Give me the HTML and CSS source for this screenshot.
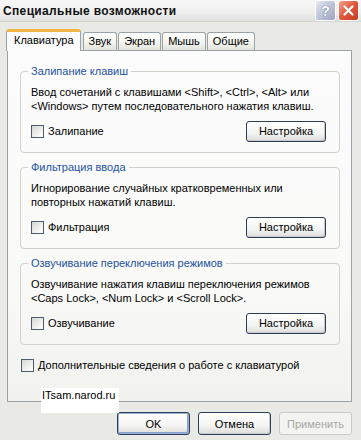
FILE: index.html
```html
<!DOCTYPE html>
<html lang="ru">
<head>
<meta charset="utf-8">
<title>Специальные возможности</title>
<link rel="stylesheet" href="styles.css">
</head>
<body>
<div class="window">
  <div class="titlebar">
    <span class="title">Специальные возможности</span>
    <div class="tb-buttons">
      <span class="tb-btn help">?</span>
      <span class="tb-btn close">
        <svg width="13" height="13" viewBox="0 0 13 13"><path d="M2.5 2.5 L10.5 10.5 M10.5 2.5 L2.5 10.5" stroke="#fff" stroke-width="2.2" stroke-linecap="round"/></svg>
      </span>
    </div>
  </div>
  <div class="content">
    <div class="tabs">
      <span class="tab active">Клавиатура</span>
      <span class="tab">Звук</span>
      <span class="tab">Экран</span>
      <span class="tab">Мышь</span>
      <span class="tab">Общие</span>
    </div>
    <div class="panel">
      <fieldset class="group">
        <legend>Залипание клавиш</legend>
        <p class="desc">Ввод сочетаний с клавишами &lt;Shift&gt;, &lt;Ctrl&gt;, &lt;Alt&gt; или<br>&lt;Windows&gt; путем последовательного нажатия клавиш.</p>
        <div class="row">
          <label class="check"><span class="box"></span>Залипание</label>
          <span class="btn setup">Настройка</span>
        </div>
      </fieldset>
      <fieldset class="group">
        <legend>Фильтрация ввода</legend>
        <p class="desc">Игнорирование случайных кратковременных или<br>повторных нажатий клавиш.</p>
        <div class="row">
          <label class="check"><span class="box"></span>Фильтрация</label>
          <span class="btn setup">Настройка</span>
        </div>
      </fieldset>
      <fieldset class="group">
        <legend>Озвучивание переключения режимов</legend>
        <p class="desc">Озвучивание нажатия клавиш переключения режимов<br>&lt;Caps Lock&gt;, &lt;Num Lock&gt; и &lt;Scroll Lock&gt;.</p>
        <div class="row">
          <label class="check"><span class="box"></span>Озвучивание</label>
          <span class="btn setup">Настройка</span>
        </div>
      </fieldset>
      <label class="check extra"><span class="box"></span>Дополнительные сведения о работе с клавиатурой</label>
    </div>
    <div class="footer">
      <span class="btn dlg default">OK</span>
      <span class="btn dlg">Отмена</span>
      <span class="btn dlg disabled">Применить</span>
    </div>
  </div>
  <div class="watermark">ITsam.narod.ru</div>
</div>
</body>
</html>
```

FILE: styles.css
```css
* { box-sizing: border-box; }
html, body { margin: 0; padding: 0; }
body {
  width: 361px;
  height: 440px;
  overflow: hidden;
  background: #e8e8e5;
  font-family: "Liberation Sans", Arial, sans-serif;
  font-size: 11px;
  color: #000;
  white-space: nowrap;
}
.window {
  position: relative;
  width: 361px;
  height: 440px;
  background: #e9e9e5;
}
.titlebar {
  height: 22px;
  display: flex;
  align-items: center;
  justify-content: space-between;
  background: linear-gradient(#f8f8f8, #eeeeee 60%, #e0e0e0);
  border-bottom: 1px solid #d4d4d0;
  padding: 0 2px 0 3px;
}
.title {
  font-weight: bold;
  font-size: 12px;
  letter-spacing: 0.35px;
  color: #111;
  margin-top: 1px;
}
.tb-buttons {
  display: flex;
  gap: 2px;
  align-self: flex-start;
}
.tb-btn {
  width: 21px;
  height: 21px;
  border-radius: 3px;
  display: flex;
  align-items: center;
  justify-content: center;
  border: 1px solid #fff;
}
.help {
  background: linear-gradient(135deg, #e4e8f2, #b6bdd4 60%, #9ea6c2);
  color: #fff;
  font-weight: bold;
  font-size: 14px;
  text-shadow: 0 0 1px #6a7390, 0 0 1px #6a7390;
}
.close {
  background: linear-gradient(135deg, #f5a090, #e0573c 50%, #c83c22);
}
.content {
  padding: 7px 9px 0 7px;
}
.tabs {
  display: flex;
  align-items: flex-end;
  height: 21px;
  position: relative;
  z-index: 1;
}
.tab {
  height: 18px;
  line-height: 17px;
  padding: 0 5px;
  margin-left: 1px;
  border: 1px solid #9aa2a6;
  border-bottom: none;
  border-radius: 3px 3px 0 0;
  background: linear-gradient(#ffffff, #f3f3ef 60%, #e2e2dc);
}
.tab.active {
  height: 22px;
  line-height: 17px;
  margin-left: -1px;
  margin-right: 1px;
  margin-bottom: -1px;
  padding: 0 6px 0 7px;
  border-top: 3px solid #f2b544;
  background: #fcfcfc;
}
.panel {
  height: 352px;
  border: 1px solid #9aa2a6;
  background: linear-gradient(#fcfcfc, #f9f9f8 70%, #f1f1ee);
  padding: 13px 11px 0 12px;
  display: flex;
  flex-direction: column;
  gap: 7px;
}
.group {
  margin: 0;
  border: 1px solid #d2d2cc;
  border-radius: 4px;
  padding: 0 13px 10px 10px;
  min-width: 0;
}
.group legend {
  color: #24529e;
  padding: 0 3px;
  margin-left: -3px;
  line-height: 14px;
}
.desc {
  margin: 7px 0 0;
  line-height: 14px;
}
.row {
  margin-top: 7px;
  display: flex;
  align-items: center;
  justify-content: space-between;
  height: 22px;
}
.check {
  display: flex;
  align-items: center;
  gap: 4px;
  line-height: 14px;
}
.box {
  width: 13px;
  height: 13px;
  border: 1px solid #4c5b70;
  background: linear-gradient(135deg, #d8d8d2, #f4f4f2 70%, #ffffff);
}
.extra {
  margin-top: 6px;
  margin-left: 1px;
}
.btn {
  display: flex;
  align-items: center;
  justify-content: center;
  border: 1px solid #2e3e5a;
  border-radius: 3px;
  background: linear-gradient(#ffffff, #f4f4f2 60%, #dcdcd8);
  box-shadow: inset -1px -1px 0 #c8c8c4;
}
.setup {
  width: 80px;
  height: 21px;
}
.footer {
  display: flex;
  justify-content: flex-end;
  gap: 8px;
  margin-top: 10px;
}
.dlg {
  width: 73px;
  height: 23px;
}
.default {
  box-shadow: inset 0 0 0 1px #9bb0d8, inset -1px -1px 0 1px #8aa0cc;
}
.disabled {
  border-color: #cbcbc4;
  color: #a8a8a4;
  background: #f3f3f0;
  box-shadow: none;
}
.watermark {
  position: absolute;
  left: 41px;
  top: 388px;
  width: 78px;
  height: 25px;
  background: #fff;
  padding: 1px 0 0 1px;
  font-size: 11px;
  line-height: 12px;
}
```
